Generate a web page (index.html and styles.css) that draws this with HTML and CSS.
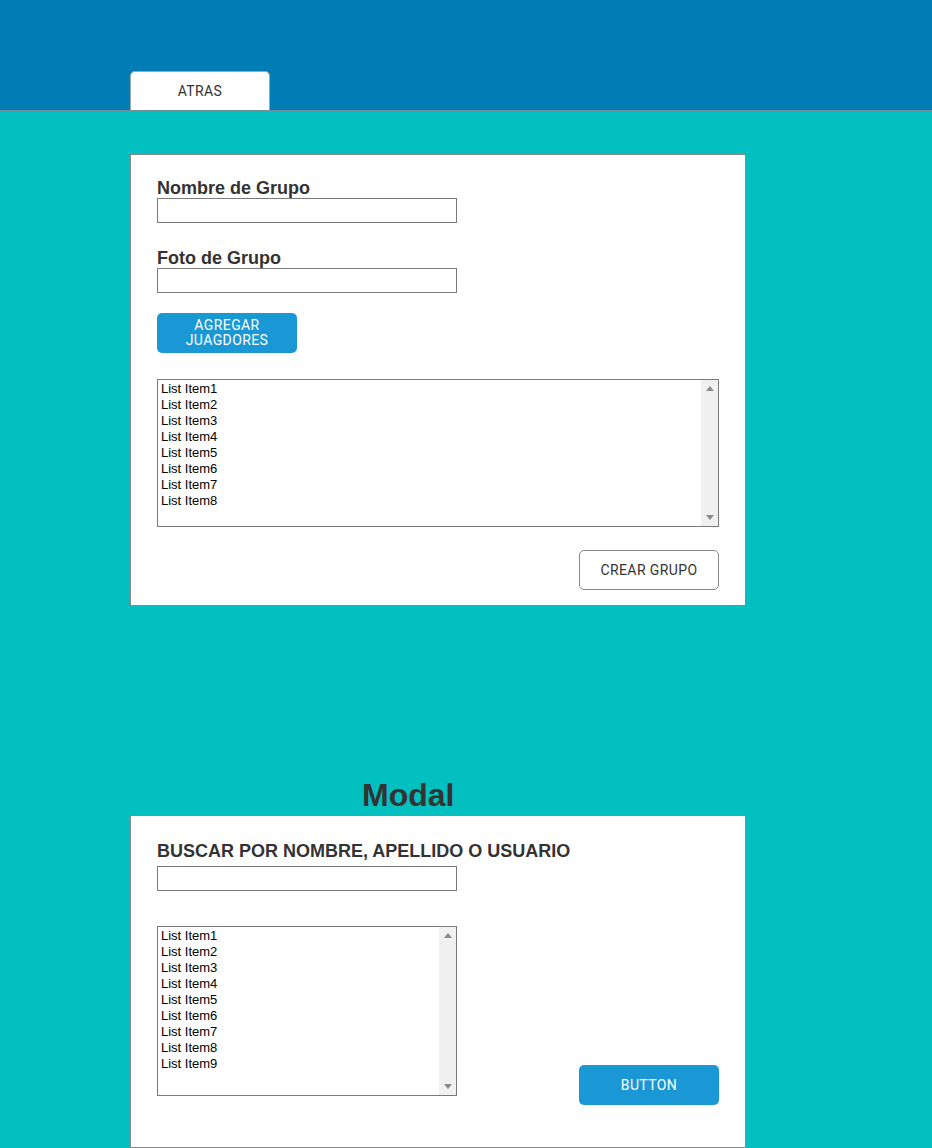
FILE: index.html
```html
<!DOCTYPE html>
<html lang="es">
<head>
<meta charset="utf-8">
<title>Crear Grupo</title>
<link rel="stylesheet" href="styles.css">
</head>
<body>
<header class="topbar">
  <button class="btn btn-back">ATRAS</button>
</header>
<main class="page">
  <section class="card card-form">
    <label class="field-label">Nombre de Grupo</label>
    <div class="text-input"></div>
    <label class="field-label second">Foto de Grupo</label>
    <div class="text-input"></div>
    <button class="btn btn-primary btn-add">AGREGAR<br>JUAGDORES</button>
    <div class="listbox listbox-wide">
      <ul class="list-items">
        <li>List Item1</li><li>List Item2</li><li>List Item3</li><li>List Item4</li>
        <li>List Item5</li><li>List Item6</li><li>List Item7</li><li>List Item8</li>
      </ul>
      <div class="scrollbar"><span class="arrow up"></span><span class="arrow down"></span></div>
    </div>
    <div class="actions">
      <button class="btn btn-outline">CREAR GRUPO</button>
    </div>
  </section>

  <h2 class="modal-title">Modal</h2>
  <section class="card card-modal">
    <label class="field-label">BUSCAR POR NOMBRE, APELLIDO O USUARIO</label>
    <div class="text-input search"></div>
    <div class="modal-row">
      <div class="listbox listbox-narrow">
        <ul class="list-items">
          <li>List Item1</li><li>List Item2</li><li>List Item3</li><li>List Item4</li>
          <li>List Item5</li><li>List Item6</li><li>List Item7</li><li>List Item8</li><li>List Item9</li>
        </ul>
        <div class="scrollbar"><span class="arrow up"></span><span class="arrow down"></span></div>
      </div>
      <button class="btn btn-primary btn-modal">BUTTON</button>
    </div>
  </section>
</main>
</body>
</html>
```
FILE: styles.css
```css
* { box-sizing: border-box; }
html, body { margin: 0; padding: 0; }
body {
  background: #02bfc0;
  font-family: "Liberation Sans", Arial, sans-serif;
  color: #333;
  height: 1148px;
  overflow: hidden;
}
.topbar {
  background: #007db4;
  height: 111px;
  border-bottom: 1px solid #6e8f99;
  display: flex;
  align-items: flex-end;
  padding-left: 130px;
}
.btn {
  font-family: Roboto, "Liberation Sans", sans-serif;
  font-size: 14px;
  letter-spacing: 0.4px;
  cursor: pointer;
  padding: 0;
  margin: 0;
}
.btn-back {
  width: 140px;
  height: 39px;
  background: #fff;
  border: 1px solid #9aa;
  border-bottom: none;
  border-radius: 5px 5px 0 0;
  color: #333;
  line-height: 16px;
}
.page {
  padding-left: 130px;
}
.card {
  width: 616px;
  background: #fff;
  border: 1px solid #888;
  padding: 0 26px;
}
.card-form {
  margin-top: 43px;
  padding-top: 23px;
  padding-bottom: 15px;
}
.field-label {
  display: block;
  font-weight: bold;
  font-size: 18px;
  line-height: 20px;
  color: #333;
  margin-bottom: 0;
}
.field-label.second { margin-top: 25px; }
.text-input {
  width: 300px;
  height: 25px;
  border: 1px solid #7a7a7a;
  background: #fff;
}
.btn-primary {
  background: #1a98d5;
  color: #fff;
  border: none;
  border-radius: 5px;
}
.btn-add {
  display: block;
  width: 140px;
  height: 40px;
  margin-top: 20px;
  line-height: 15px;
}
.listbox {
  position: relative;
  border: 1px solid #7a7a7a;
  background: #fff;
  display: flex;
}
.listbox-wide {
  width: 562px;
  height: 148px;
  margin-top: 26px;
}
.list-items {
  list-style: none;
  margin: 0;
  padding: 1px 0 0 3px;
  flex: 1;
  font-family: "Liberation Sans", Arial, sans-serif;
  font-size: 13px;
  line-height: 16px;
  color: #000;
}
.scrollbar {
  width: 17px;
  background: #f0f0f0;
  display: flex;
  flex-direction: column;
  justify-content: space-between;
  align-items: center;
  padding: 6px 0 6px;
}
.arrow {
  width: 0;
  height: 0;
  border-left: 4px solid transparent;
  border-right: 4px solid transparent;
}
.arrow.up { border-bottom: 5px solid #8a8a8a; }
.arrow.down { border-top: 5px solid #8a8a8a; }
.actions {
  display: flex;
  justify-content: flex-end;
  margin-top: 23px;
}
.btn-outline {
  width: 140px;
  height: 40px;
  background: #fff;
  border: 1px solid #888;
  border-radius: 5px;
  color: #333;
}
.modal-title {
  margin: 172px 0 3px;
  padding-left: 232px;
  font-family: "Liberation Sans", Arial, sans-serif;
  font-size: 32px;
  line-height: 34px;
  font-weight: bold;
  color: #333;
}
.card-modal {
  padding-top: 25px;
  padding-bottom: 42px;
}
.text-input.search { margin-top: 5px; }
.modal-row {
  display: flex;
  justify-content: space-between;
  align-items: flex-start;
  margin-top: 35px;
}
.listbox-narrow {
  width: 300px;
  height: 170px;
}
.btn-modal {
  width: 140px;
  height: 40px;
  margin-top: 139px;
}
```
